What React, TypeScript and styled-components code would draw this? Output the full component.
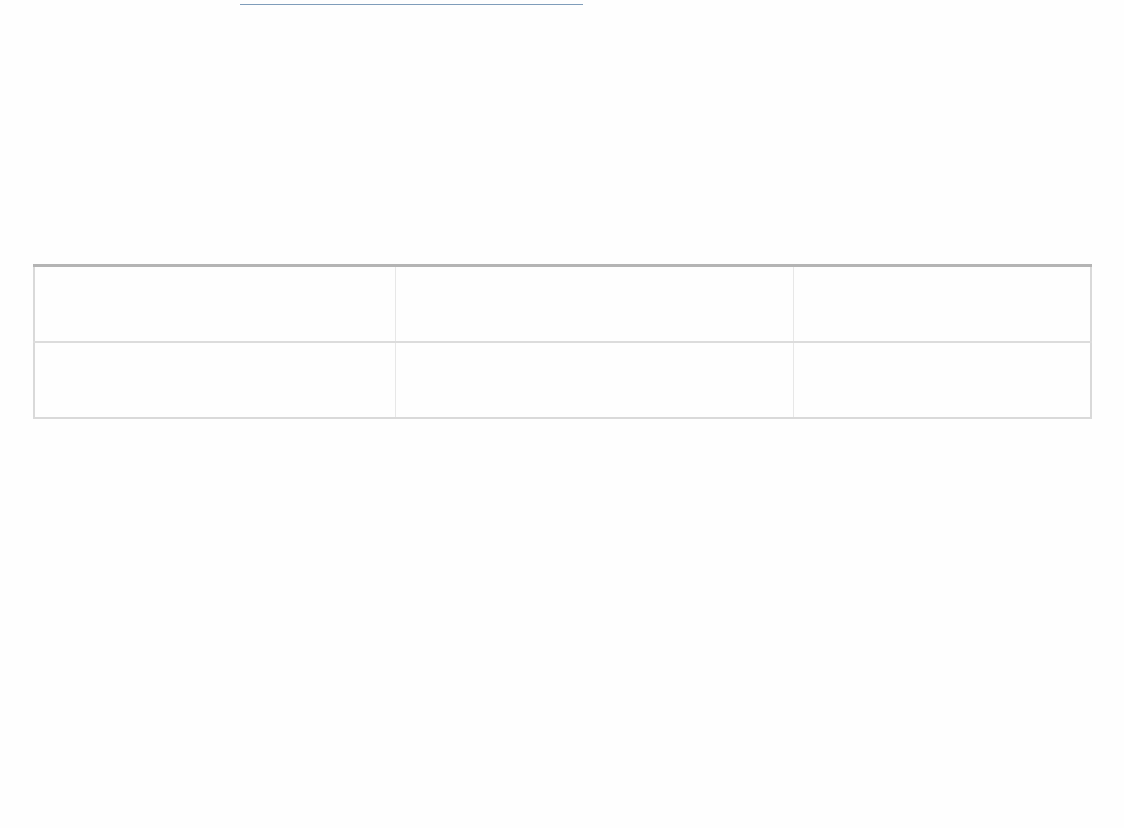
import React from "react";
import styled, { createGlobalStyle } from "styled-components";

const GlobalStyle = createGlobalStyle`
  html, body {
    margin: 0;
    padding: 0;
    background: #fefefe;
    font-family: "Liberation Sans", Arial, sans-serif;
  }
`;

const Page = styled.div`
  width: 1124px;
  min-height: 828px;
  box-sizing: border-box;
`;

const TopBar = styled.div`
  padding: 4px 0 0 240px;
`;

const LinkRule = styled.div`
  width: 343px;
  height: 1px;
  background: #7f9dba;
`;

const Section = styled.section`
  padding: 259px 33px 0;
`;

const Grid = styled.table`
  width: 1055px;
  border-collapse: collapse;
  table-layout: fixed;
  border-top: 3px solid #b4b4b4;
  border-left: 2px solid #d9d9d9;
  border-right: 2px solid #d9d9d9;
  border-bottom: 2px solid #d9d9d9;
`;

const Row = styled.tr<{ $last?: boolean }>`
  height: 76px;
  border-bottom: ${(p) => (p.$last ? "none" : "2px solid #dcdcdc")};
`;

const Cell = styled.td<{ $w: number }>`
  width: ${(p) => p.$w}px;
  padding: 0;
  border-right: 1px solid #e7e7e7;

  &:last-child {
    border-right: none;
  }
`;

const cols = [360, 397, 296];

export default function App() {
  return (
    <Page>
      <GlobalStyle />
      <TopBar>
        <LinkRule />
      </TopBar>
      <Section>
        <Grid>
          <tbody>
            {[0, 1].map((r) => (
              <Row key={r} $last={r === 1}>
                {cols.map((w, i) => (
                  <Cell key={i} $w={w} />
                ))}
              </Row>
            ))}
          </tbody>
        </Grid>
      </Section>
    </Page>
  );
}
